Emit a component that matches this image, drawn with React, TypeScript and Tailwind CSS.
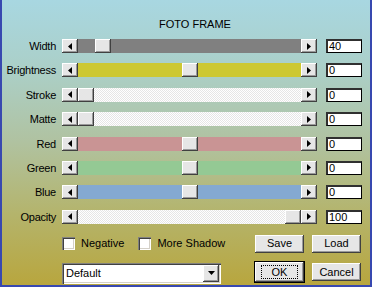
import React from 'react';

type SliderRow = {
  label: string;
  value: string;
  pos: number; // 0..1 thumb position
  track: string;
};

const rows: SliderRow[] = [
  { label: 'Width', value: '40', pos: 0.08, track: 'bg-[#808080]' },
  { label: 'Brightness', value: '0', pos: 0.5, track: 'bg-[#cdc832]' },
  { label: 'Stroke', value: '0', pos: 0, track: 'bg-[repeating-conic-gradient(#ffffff_0_25%,#e6e6e6_0_50%)] bg-[length:2px_2px]' },
  { label: 'Matte', value: '0', pos: 0, track: 'bg-[repeating-conic-gradient(#ffffff_0_25%,#e6e6e6_0_50%)] bg-[length:2px_2px]' },
  { label: 'Red', value: '0', pos: 0.5, track: 'bg-[#c99494]' },
  { label: 'Green', value: '0', pos: 0.5, track: 'bg-[#94c994]' },
  { label: 'Blue', value: '0', pos: 0.5, track: 'bg-[#84a9d1]' },
  { label: 'Opacity', value: '100', pos: 1, track: 'bg-[repeating-conic-gradient(#ffffff_0_25%,#e6e6e6_0_50%)] bg-[length:2px_2px]' },
];

const raised =
  'bg-[#e6e6e6] shadow-[inset_-1px_-1px_#404040,inset_1px_1px_#ffffff,inset_-2px_-2px_#9a9a9a]';

const ArrowBtn = ({ dir }: { dir: 'left' | 'right' }) => (
  <div className={`w-[16px] h-full shrink-0 flex items-center justify-center ${raised}`}>
    <svg width="4" height="7" viewBox="0 0 4 7">
      {dir === 'left' ? <path d="M4 0 L0 3.5 L4 7 Z" fill="#000" /> : <path d="M0 0 L4 3.5 L0 7 Z" fill="#000" />}
    </svg>
  </div>
);

const Slider = ({ row }: { row: SliderRow }) => (
  <div className="flex h-[14px] w-[255px]">
    <ArrowBtn dir="left" />
    <div className={`relative flex-1 ${row.track}`}>
      <div
        className={`absolute top-0 h-full w-[16px] ${raised}`}
        style={{ left: `calc(${row.pos} * (100% - 16px))` }}
      />
    </div>
    <ArrowBtn dir="right" />
  </div>
);

const Button = ({ children, def }: { children: React.ReactNode; def?: boolean }) => (
  <div
    className={`w-[49px] h-[18px] flex items-center justify-center ${raised} ${def ? 'outline outline-1 outline-black h-[20px]' : ''}`}
  >
    {def ? (
      <span className="border border-dotted border-black px-[10px] leading-[12px]">{children}</span>
    ) : (
      children
    )}
  </div>
);

const Checkbox = ({ label }: { label: string }) => (
  <div className="flex items-center gap-[6px]">
    <div className="w-[13px] h-[13px] bg-white shadow-[inset_1px_1px_#808080,inset_2px_2px_#404040,inset_-1px_-1px_#ffffff,inset_-2px_-2px_#d4d0c8]" />
    <span>{label}</span>
  </div>
);

export default function App() {
  return (
    <div className="w-[372px] h-[287px] border-l-2 border-r-2 border-b-2 border-[#3848b0] bg-[linear-gradient(to_bottom,#a8d7e1_0%,#abcfc7_25%,#b0c2a0_50%,#b4b46c_75%,#b8a63e_100%)] font-['Liberation_Sans',Arial,sans-serif] text-[11px] text-black overflow-hidden">
      <div className="pt-[17px] h-[30px] pl-[18px] text-center leading-[14px]">FOTO FRAME</div>
      <div className="mt-[9px] flex flex-col gap-[10.4px]">
        {rows.map((r) => (
          <div key={r.label} className="flex items-center h-[14px]">
            <div className="w-[54px] text-right tracking-[-0.25px] leading-[14px]">{r.label}</div>
            <div className="ml-[6px]">
              <Slider row={r} />
            </div>
            <div className="ml-[9px] w-[36px] h-[14px] bg-white border border-black border-t-2 border-l-2 border-t-[#303030] border-l-[#303030] leading-[11px] pl-[1px]">
              {r.value}
            </div>
          </div>
        ))}
      </div>
      <div className="mt-[11px] flex items-center h-[18px]">
        <div className="ml-[60px] flex items-center gap-[14px] w-[193px]">
          <Checkbox label="Negative" />
          <Checkbox label="More Shadow" />
        </div>
        <div className="flex gap-[8px]">
          <Button>Save</Button>
          <Button>Load</Button>
        </div>
      </div>
      <div className="mt-[9px] flex items-center h-[21px]">
        <div className="ml-[60px] mt-[2px] w-[159px] h-[21px] bg-white flex items-center justify-between shadow-[inset_1px_1px_#808080,inset_2px_2px_#404040,inset_-1px_-1px_#ffffff,inset_-2px_-2px_#d4d0c8] pl-[4px] pr-[2px]">
          <span>Default</span>
          <div className={`w-[16px] h-[17px] flex items-center justify-center ${raised}`}>
            <svg width="7" height="4" viewBox="0 0 7 4">
              <path d="M0 0 L7 0 L3.5 4 Z" fill="#000" />
            </svg>
          </div>
        </div>
        <div className="ml-[34px] flex gap-[8px] items-center">
          <Button def>OK</Button>
          <Button>Cancel</Button>
        </div>
      </div>
    </div>
  );
}
